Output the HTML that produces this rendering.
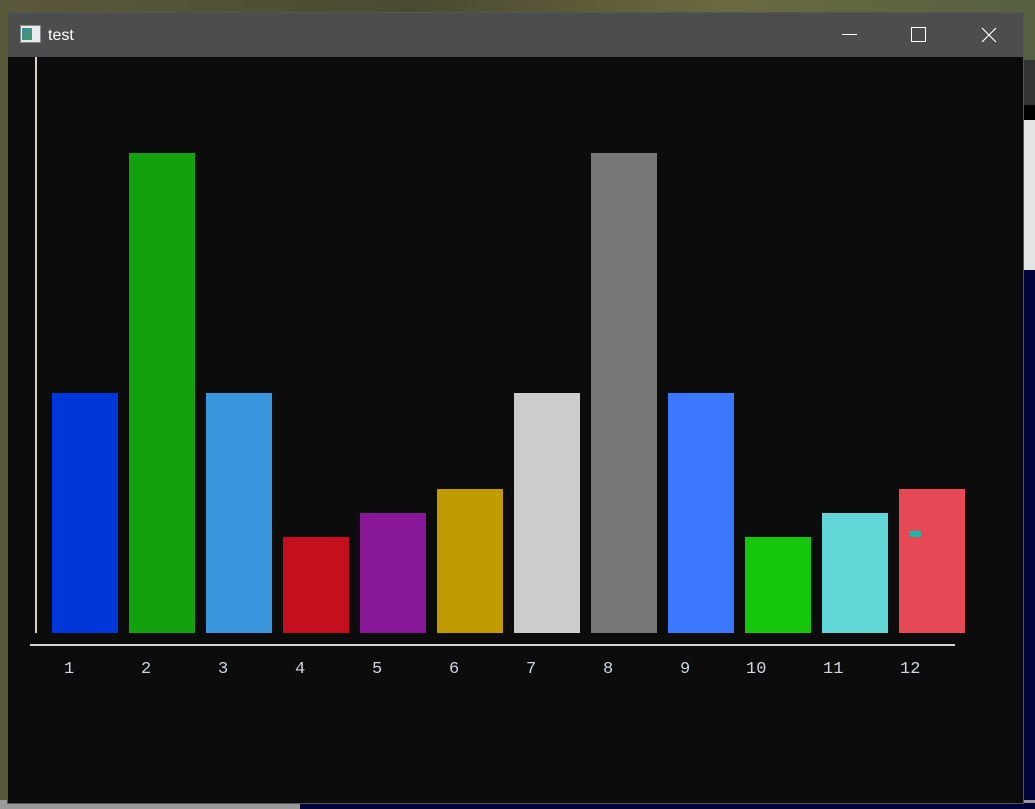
<!DOCTYPE html>
<html><head><style>
body{margin:0;width:1035px;height:809px;overflow:hidden;position:relative;background:linear-gradient(90deg,#5a5a3a,#4a4a30 40%,#6a6a40 70%,#556040);font-family:"Liberation Mono","DejaVu Sans Mono",monospace}
.r{position:absolute}
.bar{position:absolute;width:66px;bottom:176px}
.lbl{position:absolute;top:660px;color:#cfd6e0;font-size:17px}
</style></head><body>
<div class="r" style="left:1024px;top:60px;width:11px;height:45px;background:#333"></div>
<div class="r" style="left:1024px;top:105px;width:11px;height:15px;background:#000"></div>
<div class="r" style="left:1024px;top:120px;width:11px;height:150px;background:#e4e4e4"></div>
<div class="r" style="left:1024px;top:270px;width:11px;height:539px;background:#02023a"></div>
<div class="r" style="left:0;top:800px;width:1035px;height:9px;background:#9a9a9a"></div>
<div class="r" style="left:300px;top:803px;width:735px;height:6px;background:#02023a"></div>
<div class="r" style="left:7px;top:12px;width:1017px;height:792px;background:#0c0c0c;border:1px solid #555;box-sizing:border-box"></div>
<div class="r" style="left:8px;top:13px;width:1015px;height:44px;background:#4d4d4d"></div>
<div class="r" style="left:20px;top:25px;width:21px;height:18px;background:#e8ecee;border:1px solid #888;box-sizing:border-box"></div>
<div class="r" style="left:22px;top:28px;width:10px;height:12px;background:linear-gradient(135deg,#3a8aa0,#4a9a60)"></div>
<div class="r" style="left:48px;top:27px;color:#fff;font:16px 'Liberation Sans',sans-serif">test</div>
<div class="r" style="left:842px;top:34px;width:15px;height:1px;background:#fff"></div>
<div class="r" style="left:911px;top:27px;width:15px;height:15px;border:1px solid #fff;box-sizing:border-box"></div>
<svg class="r" style="left:981px;top:27px" width="16" height="16"><path d="M1 1L15 15M15 1L1 15" stroke="#fff" stroke-width="1.2"/></svg>
<div class="r" style="left:35px;top:57px;width:2px;height:576px;background:#d8d0c0"></div>
<div class="r" style="left:30px;top:644px;width:925px;height:2px;background:#d0d0d0"></div>
<div class="bar" style="left:52px;top:393px;background:#0037da"></div>
<div class="bar" style="left:129px;top:153px;background:#13a10e"></div>
<div class="bar" style="left:206px;top:393px;background:#3a96dd"></div>
<div class="bar" style="left:283px;top:537px;background:#c50f1f"></div>
<div class="bar" style="left:360px;top:513px;background:#881798"></div>
<div class="bar" style="left:437px;top:489px;background:#c19c00"></div>
<div class="bar" style="left:514px;top:393px;background:#cccccc"></div>
<div class="bar" style="left:591px;top:153px;background:#767676"></div>
<div class="bar" style="left:668px;top:393px;background:#3b78ff"></div>
<div class="bar" style="left:745px;top:537px;background:#16c60c"></div>
<div class="bar" style="left:822px;top:513px;background:#61d6d6"></div>
<div class="bar" style="left:899px;top:489px;background:#e74856"></div>
<div class="r" style="left:910px;top:531px;width:11px;height:6px;background:#1ab8a8"></div>
<div class="lbl" style="left:64px">1</div>
<div class="lbl" style="left:141px">2</div>
<div class="lbl" style="left:218px">3</div>
<div class="lbl" style="left:295px">4</div>
<div class="lbl" style="left:372px">5</div>
<div class="lbl" style="left:449px">6</div>
<div class="lbl" style="left:526px">7</div>
<div class="lbl" style="left:603px">8</div>
<div class="lbl" style="left:680px">9</div>
<div class="lbl" style="left:746px">10</div>
<div class="lbl" style="left:823px">11</div>
<div class="lbl" style="left:900px">12</div>
</body></html>
